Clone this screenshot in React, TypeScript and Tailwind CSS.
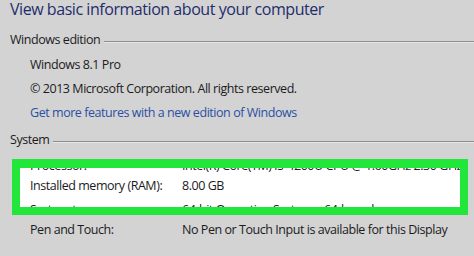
import React from "react";

const font = { fontFamily: '"Open Sans", "Noto Sans", Arial, sans-serif' };

function Section({ title }: { title: string }) {
  return (
    <div className="flex h-[24px] items-center gap-[4px] pl-[10px]">
      <span className="text-[12.5px] leading-none tracking-[-0.45px] text-[#1b1b1b]">{title}</span>
      <div className="mt-[3px] flex-1 border-t border-[#8e8e8e] shadow-[0_1px_0_#e6e6e6]" />
    </div>
  );
}

function Row({ label, value, h = "h-[24px]" }: { label: string; value: string; h?: string }) {
  return (
    <div className={`flex ${h} items-center text-[12.5px] tracking-[-0.45px] text-[#1b1b1b]`}>
      <span className="w-[152px] shrink-0">{label}</span>
      <span className="whitespace-nowrap">{value}</span>
    </div>
  );
}

export default function App() {
  return (
    <div className="h-[256px] w-[474px] overflow-hidden bg-[#d3d3d4]" style={font}>
      <div className="h-[28px] pl-[10px] text-[16px] leading-[19px] tracking-[-0.45px] text-[#1f2d6b]">
        View basic information about your computer
      </div>

      <Section title="Windows edition" />
      <div className="mt-[1px] flex flex-col pl-[30px] text-[12.5px] tracking-[-0.45px] text-[#1b1b1b]">
        <div className="h-[24px] leading-[24px]">Windows 8.1 Pro</div>
        <div className="h-[24px] leading-[24px]">© 2013 Microsoft Corporation. All rights reserved.</div>
        <div className="h-[24px] leading-[24px] text-[#2a4fa3]">
          Get more features with a new edition of Windows
        </div>
      </div>

      <div className="mt-[3px]">
        <Section title="System" />
      </div>

      <div className="ml-[12px] mt-[7px] h-[56px] w-[456px] border-[8px] border-t-[9px] border-[#22e63a] bg-white">
        <div className="h-full overflow-hidden pl-[10px]">
          <div className="-mt-[10px]">
            <Row h="h-[16px]" label="Processor:" value="Intel(R) Core(TM) i5-4200U CPU @ 1.60GHz 2.30 GHz" />
            <Row label="Installed memory (RAM):" value="8.00 GB" />
            <Row label="System type:" value="64-bit Operating System, x64-based processor" />
          </div>
        </div>
      </div>

      <div className="mt-[3px] pl-[30px]">
        <Row label="Pen and Touch:" value="No Pen or Touch Input is available for this Display" />
      </div>
    </div>
  );
}
